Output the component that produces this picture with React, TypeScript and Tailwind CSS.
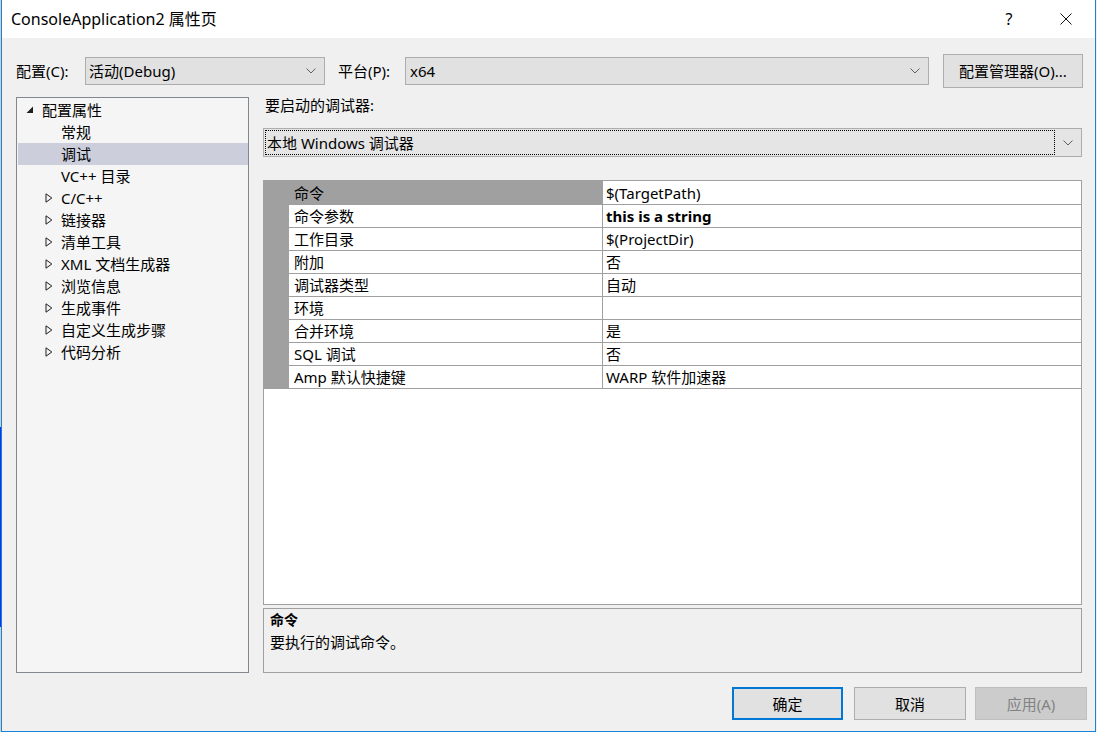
import React from "react";

const Chevron = ({ className = "" }: { className?: string }) => (
  <svg width="10" height="6" viewBox="0 0 10 6" className={className}>
    <path d="M0.5 0.5 L5 5 L9.5 0.5" fill="none" stroke="#606060" strokeWidth="1" />
  </svg>
);

const Expanded = () => (
  <svg width="8" height="8" viewBox="0 0 8 8">
    <path d="M7 0.5 L7 7 L0.5 7 Z" fill="#1e1e1e" />
  </svg>
);

const Collapsed = () => (
  <svg width="8" height="10" viewBox="0 0 8 10">
    <path d="M1 0.8 L6.8 5 L1 9.2 Z" fill="none" stroke="#1e1e1e" strokeWidth="1" />
  </svg>
);

type TreeItem = { label: string; level: 0 | 1; icon?: "exp" | "col"; selected?: boolean };

const tree: TreeItem[] = [
  { label: "配置属性", level: 0, icon: "exp" },
  { label: "常规", level: 1 },
  { label: "调试", level: 1, selected: true },
  { label: "VC++ 目录", level: 1 },
  { label: "C/C++", level: 1, icon: "col" },
  { label: "链接器", level: 1, icon: "col" },
  { label: "清单工具", level: 1, icon: "col" },
  { label: "XML 文档生成器", level: 1, icon: "col" },
  { label: "浏览信息", level: 1, icon: "col" },
  { label: "生成事件", level: 1, icon: "col" },
  { label: "自定义生成步骤", level: 1, icon: "col" },
  { label: "代码分析", level: 1, icon: "col" },
];

const rows: { name: string; value: string; bold?: boolean }[] = [
  { name: "命令", value: "$(TargetPath)" },
  { name: "命令参数", value: "this is a string", bold: true },
  { name: "工作目录", value: "$(ProjectDir)" },
  { name: "附加", value: "否" },
  { name: "调试器类型", value: "自动" },
  { name: "环境", value: "" },
  { name: "合并环境", value: "是" },
  { name: "SQL 调试", value: "否" },
  { name: "Amp 默认快捷键", value: "WARP 软件加速器" },
];

export default function App() {
  return (
    <div className="w-[1097px] h-[732px] flex bg-[#f0f0f0] text-[15px] text-black font-['Noto_Sans','Noto_Sans_CJK_SC',sans-serif] overflow-hidden">
      {/* background bleed at x=0 */}
      <div className="w-px flex flex-col shrink-0">
        <div className="h-[427px] bg-[#cfcfcf]" />
        <div className="h-[200px] bg-[#1030f0]" />
        <div className="flex-1 bg-[#cfcfcf]" />
      </div>

      {/* window */}
      <div className="w-[1095px] h-[732px] shrink-0 border-l border-r border-b border-[#1883d7] flex flex-col bg-[#f0f0f0]">
        {/* title bar */}
        <div className="h-[38px] bg-white flex items-center shrink-0">
          <div className="pl-[9px] flex-1 leading-[20px] text-[16px]">ConsoleApplication2 属性页</div>
          <div className="flex items-center gap-[11px] pr-[6px] h-full">
            <div className="w-[46px] h-full flex items-center justify-center text-[16px]">?</div>
            <div className="w-[46px] h-full flex items-center justify-center">
              <svg width="12" height="12" viewBox="0 0 12 12">
                <path d="M0.5 0.5 L11.5 11.5 M11.5 0.5 L0.5 11.5" stroke="#111" strokeWidth="1" />
              </svg>
            </div>
          </div>
        </div>

        {/* config row */}
        <div className="mt-[16px] h-[34px] flex items-center pl-[14px] shrink-0">
          <div className="w-[69px] leading-[20px] mt-[-1px]">配置(C):</div>
          <div className="w-[240px] h-[28px] bg-[#e1e1e1] border border-[#adadad] flex items-center pl-[3px] pr-[8px]">
            <span className="flex-1 leading-[20px] mt-[-1px]">活动(Debug)</span>
            <Chevron />
          </div>
          <div className="ml-[13px] w-[67px] leading-[20px] mt-[-1px]">平台(P):</div>
          <div className="w-[524px] h-[28px] bg-[#e1e1e1] border border-[#adadad] flex items-center pl-[4px] pr-[8px]">
            <span className="flex-1 leading-[20px] mt-[-1px]">x64</span>
            <Chevron />
          </div>
          <div className="ml-[14px] w-[140px] h-[34px] bg-[#e1e1e1] border border-[#adadad] flex items-center justify-center leading-[20px]">
            配置管理器(O)...
          </div>
        </div>

        {/* main */}
        <div className="mt-[9px] flex pl-[14px] shrink-0">
          {/* tree */}
          <div className="w-[233px] h-[576px] bg-[#f5f5f5] border border-[#828790] pt-[1px] pl-[1px]">
            {tree.map((t) => (
              <div
                key={t.label}
                className={`h-[22px] flex items-center ${t.selected ? "bg-[#cccedb]" : ""} ${
                  t.level === 0 ? "pl-[8px]" : "pl-[27px]"
                }`}
              >
                <div className="w-[16px] h-full flex items-center">
                  {t.icon === "exp" && <Expanded />}
                  {t.icon === "col" && <Collapsed />}
                </div>
                <span className="leading-[20px] whitespace-nowrap">{t.label}</span>
              </div>
            ))}
          </div>

          {/* right column */}
          <div className="ml-[14px] w-[819px] flex flex-col">
            <div className="h-[16px] leading-[16px] pl-[2px]">要启动的调试器:</div>
            <div className="mt-[15px] h-[29px] bg-[#e5e5e5] border border-[#adadad] flex items-center p-px pr-[8px]">
              <div className="flex-1 h-full border border-dotted border-black flex items-center pl-[1px] mr-[8px]">
                <span className="leading-[20px]">本地 Windows 调试器</span>
              </div>
              <Chevron />
            </div>

            {/* property grid */}
            <div className="mt-[23px] h-[425px] bg-white border border-[#a0a0a0] flex flex-col">
              {rows.map((r, i) => (
                <div key={r.name} className={`flex ${i === 0 ? "h-[24px]" : "h-[23px]"}`}>
                  <div className="w-[25px] bg-[#a0a0a0]" />
                  <div
                    className={`w-[313px] border-b border-[#a0a0a0] flex items-center pl-[5px] whitespace-nowrap ${
                      i === 0 ? "bg-[#a0a0a0]" : ""
                    }`}
                  >
                    <span className="leading-[20px]">{r.name}</span>
                  </div>
                  <div className="w-[479px] border-l border-b border-[#a0a0a0] flex items-center pl-[3px] whitespace-nowrap">
                    <span className={`leading-[20px] ${r.bold ? "font-bold" : ""}`}>{r.value}</span>
                  </div>
                </div>
              ))}
            </div>

            {/* description */}
            <div className="mt-[3px] h-[65px] border border-[#a0a0a0] bg-[#f0f0f0] pl-[6px] pt-[2px]">
              <div className="font-bold text-[14px] leading-[18px]">命令</div>
              <div className="leading-[20px] mt-[3px]">要执行的调试命令。</div>
            </div>
          </div>
        </div>

        {/* buttons */}
        <div className="mt-[14px] h-[33px] flex justify-end pr-[8px] shrink-0">
          <div className="w-[111px] h-[33px] bg-[#e1e1e1] border-2 border-[#0078d7] flex items-center justify-center leading-[20px]">
            确定
          </div>
          <div className="ml-[11px] w-[112px] h-[33px] bg-[#e1e1e1] border border-[#adadad] flex items-center justify-center leading-[20px]">
            取消
          </div>
          <div className="ml-[9px] w-[112px] h-[33px] bg-[#cccccc] border border-[#bfbfbf] flex items-center justify-center leading-[20px] text-[#838383]">
            应用(A)
          </div>
        </div>
      </div>

      <div className="w-px bg-[#f0f0f0] shrink-0" />
    </div>
  );
}
